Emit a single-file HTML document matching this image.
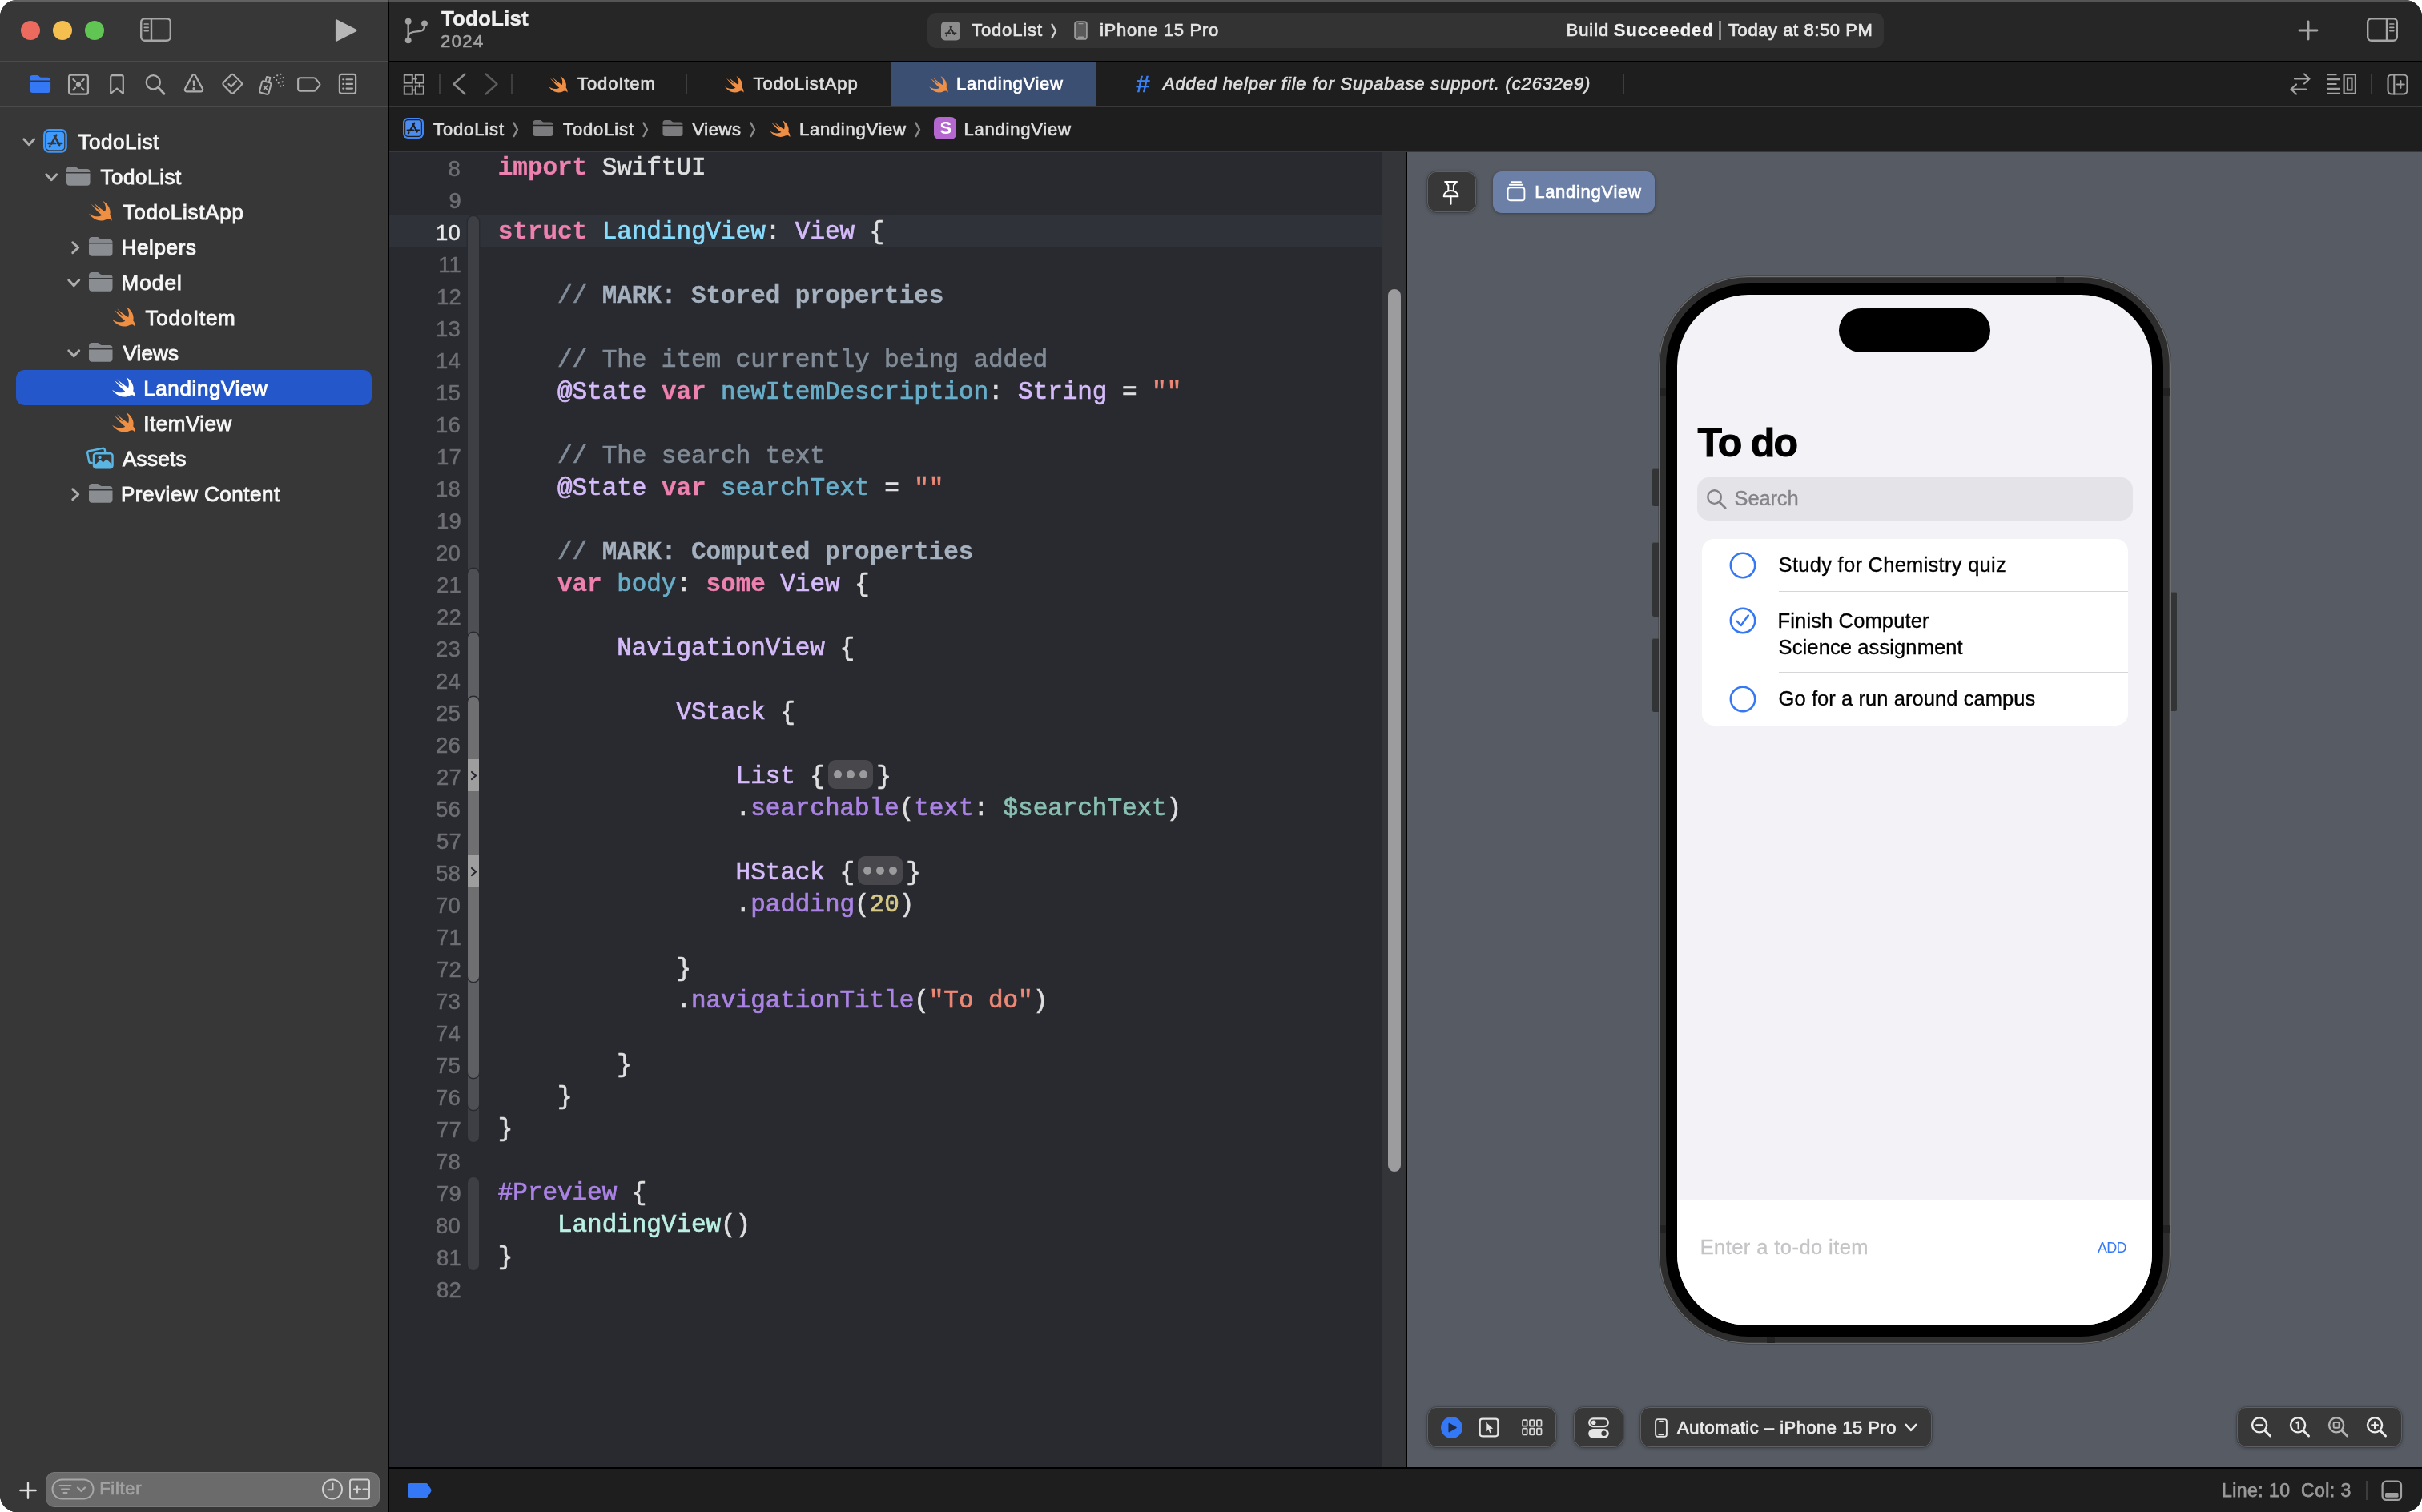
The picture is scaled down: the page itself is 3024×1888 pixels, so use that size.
<!DOCTYPE html>
<html lang="en"><head><meta charset="utf-8"><title>TodoList — LandingView.swift</title>
<style>
html,body{margin:0;padding:0;background:#fff;}
body{width:3024px;height:1888px;overflow:hidden;position:relative;}
.win{position:absolute;left:0;top:0;width:3024px;height:1888px;border-radius:21px;overflow:hidden;background:#1e1e1e;will-change:transform;}
.win div,.win svg{position:absolute;}
.win svg{overflow:visible;display:block;}
.t{white-space:pre;-webkit-text-stroke:0.700px currentColor;}
.code{white-space:pre;font:400 31px/40px "Liberation Mono",monospace;color:#dfdfe0;height:40px;}
.code span{position:static;-webkit-text-stroke:0.700px currentColor;}
.code .k,.code .m{-webkit-text-stroke:0.300px currentColor;}
.k{color:#ee81b0;font-weight:700;}
.p{color:#dfdfe0;}
.td{color:#89dcfb;}
.d{color:#68aec9;}
.ot{color:#d5bbfa;}
.c{color:#818c97;}
.m{color:#a5b1be;font-weight:700;}
.s{color:#ef8876;}
.n{color:#d6ca86;}
.f{color:#ab83e5;}
.pv{color:#89c0b3;}
.pt{color:#bbf0e4;}
.fold{display:inline-block;position:relative!important;width:56px;height:0;margin:0 4.300px 0 4px;vertical-align:baseline;letter-spacing:0;}
.fold b{position:absolute;left:0;top:-28.700px;width:56px;height:36px;border-radius:9px;background:#48484c;}
.fold i{position:absolute;top:13px;width:10px;height:10px;border-radius:50%;background:#9b9b9d;}
.fold i:nth-child(1){left:7px;}.fold i:nth-child(2){left:23px;}.fold i:nth-child(3){left:39px;}
</style></head>
<body><div class="win">
<div style="left:0px;top:0px;width:484px;height:1888px;background:#373737;"></div>
<div style="left:486px;top:0px;width:2538px;height:76px;background:#262626;"></div>
<div style="left:486px;top:78px;width:2538px;height:54px;background:#1e1e1e;"></div>
<div style="left:486px;top:134px;width:2538px;height:54px;background:#1e1e1e;"></div>
<div style="left:486px;top:190px;width:1239px;height:1642px;background:#292a30;"></div>
<div style="left:1725px;top:190px;width:30px;height:1642px;background:#343539;border-left:1px solid #404146;box-sizing:border-box;"></div>
<div style="left:1757px;top:190px;width:1267px;height:1642px;background:#565b64;"></div>
<div style="left:486px;top:1834px;width:2538px;height:54px;background:#1e1e1e;"></div>
<div style="left:0px;top:76px;width:484px;height:2px;background:#4b4b4b;"></div>
<div style="left:0px;top:132px;width:484px;height:2px;background:#4b4b4b;"></div>
<div style="left:486px;top:76px;width:2538px;height:2px;background:#000;"></div>
<div style="left:486px;top:132px;width:2538px;height:2px;background:#393939;"></div>
<div style="left:486px;top:188px;width:2538px;height:2px;background:#393939;"></div>
<div style="left:486px;top:1832px;width:2538px;height:2px;background:#000;"></div>
<div style="left:484px;top:0px;width:2px;height:1888px;background:#000;"></div>
<div style="left:1755px;top:190px;width:2px;height:1642px;background:#000;"></div>
<div style="left:0px;top:0px;width:3024px;height:2px;background:rgba(255,255,255,0.22);"></div>
<div style="left:26px;top:26px;width:24px;height:24px;background:#ed6a5e;border-radius:50%;"></div>
<div style="left:66px;top:26px;width:24px;height:24px;background:#f4bf4f;border-radius:50%;"></div>
<div style="left:106px;top:26px;width:24px;height:24px;background:#61c554;border-radius:50%;"></div>
<svg style="left:174px;top:21px;" width="41" height="32" viewBox="0 0 41 32"><rect x="2.2" y="2.2" width="36.600" height="27.600" rx="4.500" fill="none" stroke="#a6a6a6" stroke-width="2.400"/><path d="M15 2.200V29.800" stroke="#a6a6a6" stroke-width="2.400"/><path d="M6.300 9h4.800M6.300 13.300h4.800M6.300 17.600h4.800" stroke="#a6a6a6" stroke-width="1.700" stroke-linecap="round"/></svg>
<svg style="left:418px;top:23px;" width="29" height="30" viewBox="0 0 29 30"><path d="M2.200 2.600L26.300 15L2.200 27.400Z" fill="#b6b6b6" stroke="#b6b6b6" stroke-width="2.600" stroke-linejoin="round"/></svg>
<svg style="left:504.2px;top:21px;" width="33" height="35" viewBox="0 0 33 35"><g fill="none" stroke="#a2a2a2" stroke-width="2.400" stroke-linecap="round"><path d="M5.700 8.500V27.500"/><path d="M26 11.500c0 5.600-3.600 6.700-9.500 6.900-6 .3-10.800 1.300-10.800 6.600"/></g><circle cx="5.700" cy="5.700" r="3.900" fill="#a2a2a2"/><circle cx="5.700" cy="29.300" r="3.900" fill="#a2a2a2"/><circle cx="26" cy="8.300" r="3.900" fill="#a2a2a2"/></svg>
<div class="t" style="left:551.00px;top:9.69px;font:normal 700 26px/26px 'Liberation Sans', sans-serif;color:#f0f0f0;letter-spacing:0.120px;-webkit-text-stroke:0.4px currentColor;">TodoList</div>
<div class="t" style="left:550.00px;top:41.38px;font:normal 400 22px/22px 'Liberation Sans', sans-serif;color:#a2a2a2;letter-spacing:1.431px;">2024</div>
<div style="left:1158px;top:16px;width:1194px;height:44px;background:#333333;border-radius:11px;"></div>
<svg style="left:1175px;top:26.5px;" width="24" height="23.5" viewBox="0 0 24 23.5"><rect width="24" height="23.500" rx="5" fill="#8c8c8c"/><g stroke="#2d2d2d" stroke-width="1.700" stroke-linecap="round" fill="none"><path d="M13.400 6.200L8.400 15"/><path d="M11.300 6.600L16.400 16"/><path d="M5.600 14.300H12"/><path d="M14.800 14.300H18.600"/><path d="M7 17L6.600 17.700"/></g></svg>
<div class="t" style="left:1213.00px;top:27.38px;font:normal 400 22px/22px 'Liberation Sans', sans-serif;color:#e4e4e4;letter-spacing:0.882px;">TodoList</div>
<svg style="left:1312px;top:28.6px;" width="8" height="20" viewBox="0 0 8 20"><path d="M1.500 1.500L6 9.800L1.500 18.100" fill="none" stroke="#d0d0d0" stroke-width="2.400" stroke-linecap="round" stroke-linejoin="round"/></svg>
<svg style="left:1341px;top:26px;" width="17" height="24" viewBox="0 0 17 24"><rect x="1.100" y="1.100" width="14.800" height="21.800" rx="3" fill="#5a5a5a" stroke="#9a9a9a" stroke-width="1.800"/><path d="M6 3.600h5" stroke="#9a9a9a" stroke-width="1.400" stroke-linecap="round"/><path d="M5.500 20.200h6" stroke="#9a9a9a" stroke-width="1.400" stroke-linecap="round"/></svg>
<div class="t" style="left:1373.00px;top:27.38px;font:normal 400 22px/22px 'Liberation Sans', sans-serif;color:#e4e4e4;letter-spacing:0.733px;">iPhone 15 Pro</div>
<div class="t" style="left:1955.50px;top:27.38px;font:normal 400 22px/22px 'Liberation Sans', sans-serif;color:#e8e8e8;letter-spacing:0.954px;">Build</div>
<div class="t" style="left:2014.70px;top:27.38px;font:normal 700 22px/22px 'Liberation Sans', sans-serif;color:#f2f2f2;letter-spacing:0.984px;-webkit-text-stroke:0.3px currentColor;">Succeeded</div>
<div class="t" style="left:2144.20px;top:24.34px;font:normal 400 25px/25px 'Liberation Sans', sans-serif;color:#d6d6d6;letter-spacing:0.000px;-webkit-text-stroke:0px currentColor;">|</div>
<div class="t" style="left:2158.00px;top:27.38px;font:normal 400 22px/22px 'Liberation Sans', sans-serif;color:#e8e8e8;letter-spacing:0.574px;">Today at 8:50 PM</div>
<svg style="left:2869px;top:25px;" width="26" height="26" viewBox="0 0 26 26"><path d="M13 2V24M2 13H24" stroke="#a6a6a6" stroke-width="2.900" stroke-linecap="round"/></svg>
<svg style="left:2954px;top:21px;" width="41" height="32" viewBox="0 0 41 32"><rect x="2.200" y="2.200" width="36.600" height="27.600" rx="4.500" fill="none" stroke="#a6a6a6" stroke-width="2.400"/><path d="M26 2.200V29.800" stroke="#a6a6a6" stroke-width="2.400"/><path d="M29.900 9h4.800M29.900 13.300h4.800M29.900 17.600h4.800" stroke="#a6a6a6" stroke-width="1.700" stroke-linecap="round"/></svg>
<svg style="left:503px;top:92px;" width="28" height="27" viewBox="0 0 28 27"><g fill="none" stroke="#a2a2a2" stroke-width="2"><rect x="1.800" y="1.600" width="10" height="10"/><rect x="15.800" y="1.600" width="10" height="10"/><rect x="1.800" y="15.600" width="10" height="10"/><rect x="15.800" y="15.600" width="10" height="10"/><path d="M11.800 6.600h6M20.800 11.600v6M11.800 20.600h4"/></g></svg>
<div style="left:548px;top:93px;width:2px;height:24px;background:#3d3d3d;"></div>
<svg style="left:565px;top:91px;" width="17" height="28" viewBox="0 0 17 28"><path d="M15.5 1.5L1.5 14.0L15.5 26.5" fill="none" stroke="#8e8e8e" stroke-width="2.4" stroke-linecap="round" stroke-linejoin="round"/></svg>
<svg style="left:605px;top:91px;" width="17" height="28" viewBox="0 0 17 28"><path d="M1.5 1.5L15.5 14.0L1.5 26.5" fill="none" stroke="#5c5c5c" stroke-width="2.4" stroke-linecap="round" stroke-linejoin="round"/></svg>
<div style="left:638px;top:93px;width:2px;height:24px;background:#3d3d3d;"></div>
<svg style="left:685.2px;top:95.2px;" width="23.6" height="20.6" viewBox="2.41 3.41 18.12 16.21" preserveAspectRatio="none"><path d="M13.543 3.41c4.114 2.47 6.545 7.162 5.549 11.131-.024.093-.05.181-.076.272l.002.001c2.062 2.538 1.5 5.258 1.236 4.745-1.072-2.086-3.066-1.568-4.088-1.043a6.803 6.803 0 0 1-.281.158l-.02.012-.002.002c-2.115 1.123-4.957 1.205-7.812-.022a12.568 12.568 0 0 1-5.64-4.838c.649.48 1.35.902 2.097 1.252 3.019 1.414 6.051 1.311 8.197-.002C9.651 12.73 7.101 9.67 5.146 7.191a10.628 10.628 0 0 1-1.005-1.384c2.34 2.142 6.038 4.83 7.365 5.576C8.69 8.408 6.208 4.743 6.324 4.86c4.436 4.47 8.528 6.996 8.528 6.996.154.085.27.154.36.213.085-.215.16-.437.224-.668.708-2.588-.09-5.548-1.893-7.992z" fill="#ee8f45"/></svg>
<div class="t" style="left:721.00px;top:94.38px;font:normal 400 22px/22px 'Liberation Sans', sans-serif;color:#dedede;letter-spacing:0.905px;">TodoItem</div>
<div style="left:856px;top:93px;width:2px;height:24px;background:#3d3d3d;"></div>
<svg style="left:905px;top:95.2px;" width="23.6" height="20.6" viewBox="2.41 3.41 18.12 16.21" preserveAspectRatio="none"><path d="M13.543 3.41c4.114 2.47 6.545 7.162 5.549 11.131-.024.093-.05.181-.076.272l.002.001c2.062 2.538 1.5 5.258 1.236 4.745-1.072-2.086-3.066-1.568-4.088-1.043a6.803 6.803 0 0 1-.281.158l-.02.012-.002.002c-2.115 1.123-4.957 1.205-7.812-.022a12.568 12.568 0 0 1-5.64-4.838c.649.48 1.35.902 2.097 1.252 3.019 1.414 6.051 1.311 8.197-.002C9.651 12.73 7.101 9.67 5.146 7.191a10.628 10.628 0 0 1-1.005-1.384c2.34 2.142 6.038 4.83 7.365 5.576C8.69 8.408 6.208 4.743 6.324 4.86c4.436 4.47 8.528 6.996 8.528 6.996.154.085.27.154.36.213.085-.215.16-.437.224-.668.708-2.588-.09-5.548-1.893-7.992z" fill="#ee8f45"/></svg>
<div class="t" style="left:940.50px;top:94.38px;font:normal 400 22px/22px 'Liberation Sans', sans-serif;color:#dedede;letter-spacing:0.915px;">TodoListApp</div>
<div style="left:1112px;top:78px;width:256px;height:54px;background:#3b4f73;"></div>
<svg style="left:1159.5px;top:95.2px;" width="23.6" height="20.6" viewBox="2.41 3.41 18.12 16.21" preserveAspectRatio="none"><path d="M13.543 3.41c4.114 2.47 6.545 7.162 5.549 11.131-.024.093-.05.181-.076.272l.002.001c2.062 2.538 1.5 5.258 1.236 4.745-1.072-2.086-3.066-1.568-4.088-1.043a6.803 6.803 0 0 1-.281.158l-.02.012-.002.002c-2.115 1.123-4.957 1.205-7.812-.022a12.568 12.568 0 0 1-5.64-4.838c.649.48 1.35.902 2.097 1.252 3.019 1.414 6.051 1.311 8.197-.002C9.651 12.73 7.101 9.67 5.146 7.191a10.628 10.628 0 0 1-1.005-1.384c2.34 2.142 6.038 4.83 7.365 5.576C8.69 8.408 6.208 4.743 6.324 4.86c4.436 4.47 8.528 6.996 8.528 6.996.154.085.27.154.36.213.085-.215.16-.437.224-.668.708-2.588-.09-5.548-1.893-7.992z" fill="#ee8f45"/></svg>
<div class="t" style="left:1194.00px;top:94.38px;font:normal 400 22px/22px 'Liberation Sans', sans-serif;color:#ffffff;letter-spacing:0.730px;">LandingView</div>
<div class="t" style="left:1418.30px;top:90.20px;font:italic 400 30px/30px 'Liberation Sans', sans-serif;color:#3b82f6;letter-spacing:0.000px;">#</div>
<div class="t" style="left:1452.00px;top:94.38px;font:italic 400 22px/22px 'Liberation Sans', sans-serif;color:#dedede;letter-spacing:0.843px;">Added helper file for Supabase support. (c2632e9)</div>
<div style="left:2026px;top:93px;width:2px;height:24px;background:#3d3d3d;"></div>
<svg style="left:2858px;top:90px;" width="28" height="30" viewBox="0 0 28 30"><g fill="none" stroke="#a2a2a2" stroke-width="2.200" stroke-linecap="round" stroke-linejoin="round"><path d="M7 8.500H25.500M19 2.500L25.500 8.500L19 14.500"/><path d="M21 21.500H2.500M9 15.500L2.500 21.500L9 27.500"/></g></svg>
<svg style="left:2905px;top:91px;" width="38" height="28" viewBox="0 0 38 28"><g fill="none" stroke="#a2a2a2" stroke-width="2.200"><path d="M1 2.200H12.500M1 8.100H17M1 14H12.500M1 19.900H17M1 25.800H17"/><rect x="21.600" y="2.100" width="14.300" height="23.800"/><rect x="26" y="6.600" width="5.500" height="14.800"/></g></svg>
<div style="left:2960px;top:93px;width:2px;height:24px;background:#3d3d3d;"></div>
<svg style="left:2979.5px;top:91.5px;" width="27" height="27" viewBox="0 0 28 28"><g fill="none" stroke="#a2a2a2" stroke-width="2.200" stroke-linecap="round"><rect x="1.600" y="1.600" width="24.800" height="24.800" rx="4.500"/><path d="M9.600 1.600V26.400"/><path d="M18 9.500V18.500M13.500 14H22.500"/></g></svg>
<svg style="left:503px;top:147px;" width="26" height="26" viewBox="0 0 26 26"><rect x="0" y="0" width="26" height="26" rx="6.2" fill="#3f86f4"/><rect x="2.1" y="2.1" width="21.8" height="21.8" rx="4.3" fill="#1e1e1e"/><rect x="3.2" y="3.2" width="19.600" height="19.600" rx="3.300" fill="#4a8cf0"/><g stroke="#1e1e1e" stroke-width="2.2" stroke-linecap="round" fill="none"><path d="M14.300 6.700L8.800 16.200"/><path d="M12 7.100L17.700 17.600"/><path d="M5.700 15.700H13.200"/><path d="M15.700 15.700H20.300"/><path d="M7.400 18.500L6.900 19.300"/></g></svg>
<div class="t" style="left:541.00px;top:150.58px;font:normal 400 22px/22px 'Liberation Sans', sans-serif;color:#dedede;letter-spacing:0.882px;">TodoList</div>
<svg style="left:640px;top:151.6px;" width="8" height="20" viewBox="0 0 8 20"><path d="M1.500 1.500L6 9.800L1.500 18.100" fill="none" stroke="#8a8a8a" stroke-width="2.400" stroke-linecap="round" stroke-linejoin="round"/></svg>
<svg style="left:665px;top:150.3px;" width="26" height="20" viewBox="0 0 30 24"><path d="M0 4.2C0 1.8 1.4 0 3.8 0h6.4c1.3 0 2 .3 2.8 1.1l1 1c.6.6 1.1.8 2 .8h10.2C28.600 2.900 30 4.300 30 6.600V7H0z" fill="#6f6f71"/><path d="M0 8.600h30v11.400c0 2.500-1.400 4-3.900 4H3.900C1.400 24 0 22.500 0 20z" fill="#7c7c7e"/></svg>
<div class="t" style="left:703.00px;top:150.58px;font:normal 400 22px/22px 'Liberation Sans', sans-serif;color:#dedede;letter-spacing:0.882px;">TodoList</div>
<svg style="left:802px;top:151.6px;" width="8" height="20" viewBox="0 0 8 20"><path d="M1.500 1.500L6 9.800L1.500 18.100" fill="none" stroke="#8a8a8a" stroke-width="2.400" stroke-linecap="round" stroke-linejoin="round"/></svg>
<svg style="left:827px;top:150.3px;" width="26" height="20" viewBox="0 0 30 24"><path d="M0 4.2C0 1.8 1.4 0 3.8 0h6.4c1.3 0 2 .3 2.8 1.1l1 1c.6.6 1.1.8 2 .8h10.2C28.600 2.900 30 4.300 30 6.600V7H0z" fill="#6f6f71"/><path d="M0 8.600h30v11.400c0 2.500-1.400 4-3.900 4H3.900C1.400 24 0 22.500 0 20z" fill="#7c7c7e"/></svg>
<div class="t" style="left:864.50px;top:150.58px;font:normal 400 22px/22px 'Liberation Sans', sans-serif;color:#dedede;letter-spacing:0.553px;">Views</div>
<svg style="left:936px;top:151.6px;" width="8" height="20" viewBox="0 0 8 20"><path d="M1.500 1.500L6 9.800L1.500 18.100" fill="none" stroke="#8a8a8a" stroke-width="2.400" stroke-linecap="round" stroke-linejoin="round"/></svg>
<svg style="left:961px;top:150px;" width="25.5" height="21" viewBox="2.41 3.41 18.12 16.21" preserveAspectRatio="none"><path d="M13.543 3.41c4.114 2.47 6.545 7.162 5.549 11.131-.024.093-.05.181-.076.272l.002.001c2.062 2.538 1.5 5.258 1.236 4.745-1.072-2.086-3.066-1.568-4.088-1.043a6.803 6.803 0 0 1-.281.158l-.02.012-.002.002c-2.115 1.123-4.957 1.205-7.812-.022a12.568 12.568 0 0 1-5.64-4.838c.649.48 1.35.902 2.097 1.252 3.019 1.414 6.051 1.311 8.197-.002C9.651 12.73 7.101 9.67 5.146 7.191a10.628 10.628 0 0 1-1.005-1.384c2.34 2.142 6.038 4.83 7.365 5.576C8.69 8.408 6.208 4.743 6.324 4.86c4.436 4.47 8.528 6.996 8.528 6.996.154.085.27.154.36.213.085-.215.16-.437.224-.668.708-2.588-.09-5.548-1.893-7.992z" fill="#ee8f45"/></svg>
<div class="t" style="left:998.00px;top:150.58px;font:normal 400 22px/22px 'Liberation Sans', sans-serif;color:#dedede;letter-spacing:0.730px;">LandingView</div>
<svg style="left:1142px;top:151.6px;" width="8" height="20" viewBox="0 0 8 20"><path d="M1.500 1.500L6 9.800L1.500 18.100" fill="none" stroke="#8a8a8a" stroke-width="2.400" stroke-linecap="round" stroke-linejoin="round"/></svg>
<div style="left:1166px;top:146px;width:28px;height:28px;background:#b467cf;border-radius:6.500px;"></div>
<div class="t" style="left:1173.60px;top:149.18px;font:normal 700 22px/22px 'Liberation Sans', sans-serif;color:#ffffff;letter-spacing:0.000px;-webkit-text-stroke:0px currentColor;">S</div>
<div class="t" style="left:1203.50px;top:150.58px;font:normal 400 22px/22px 'Liberation Sans', sans-serif;color:#dedede;letter-spacing:0.780px;">LandingView</div>
<svg style="left:509px;top:1852px;" width="30" height="18" viewBox="0 0 30 18"><path d="M3 0H22.500c1.200 0 2 .4 2.600 1.300L29 7.300c.7 1 .7 2.400 0 3.400l-3.900 6c-.6.900-1.400 1.300-2.600 1.300H3c-1.800 0-3-1.200-3-3V3C0 1.200 1.200 0 3 0z" fill="#3478f6"/></svg>
<div class="t" style="left:2774.00px;top:1849.53px;font:normal 400 23px/23px 'Liberation Sans', sans-serif;color:#9a9a9a;letter-spacing:0.439px;-webkit-text-stroke:0.75px currentColor;">Line: 10  Col: 3</div>
<div style="left:2954px;top:1849px;width:2px;height:24px;background:#3d3d3d;"></div>
<svg style="left:2972.7px;top:1847.7px;" width="26.6" height="26.6" viewBox="0 0 28 28"><rect x="1.700" y="1.700" width="24.600" height="24.600" rx="5" fill="none" stroke="#a0a0a0" stroke-width="2.400"/><rect x="5.300" y="16.800" width="17.400" height="6" rx="1.500" fill="#a0a0a0"/></svg>
<svg style="left:36.8px;top:93.9px;" width="26.4" height="22" viewBox="0 0 27 23"><path d="M0 4C0 1.600 1.300 0 3.600 0h5.600c1.200 0 1.900.3 2.600 1l1 1c.6.600 1.100.800 1.900.800h8.800C25.700 2.800 27 4.100 27 6.300V6.800H0z" fill="#3478f6"/><path d="M0 8.800h27v10.400c0 2.400-1.300 3.800-3.700 3.800H3.700C1.300 23 0 21.600 0 19.200z" fill="#3478f6"/></svg>
<svg style="left:84px;top:91.5px;" width="28" height="27" viewBox="0 0 28 27"><rect x="2.100" y="1.700" width="23.800" height="24" rx="2.800" fill="none" stroke="#adadad" stroke-width="2.300"/><path d="M7.400 7.100L10 9.700M20.600 7.100L18 9.700M7.400 20.300L10 17.700M20.600 20.300L18 17.700" stroke="#adadad" stroke-width="2.200" stroke-linecap="round"/><circle cx="14" cy="13.700" r="3.200" fill="#adadad"/></svg>
<svg style="left:136px;top:91.5px;" width="20" height="28" viewBox="0 0 20 28"><path d="M2.200 4.200c0-1.300.8-2.100 2.100-2.100h11.400c1.300 0 2.100.8 2.100 2.100V25L10 18.500L2.200 25z" fill="none" stroke="#adadad" stroke-width="2.200" stroke-linejoin="round"/></svg>
<svg style="left:181.3px;top:91.6px;" width="26" height="28" viewBox="0 0 26 28"><circle cx="10.300" cy="10.800" r="8.600" fill="none" stroke="#adadad" stroke-width="2.300"/><path d="M16.600 17.300L24 25.300" stroke="#adadad" stroke-width="2.800" stroke-linecap="round"/></svg>
<svg style="left:229px;top:90.7px;" width="26" height="27" viewBox="0 0 26 26" preserveAspectRatio="none"><path d="M11.100 3.200c.9-1.500 2.900-1.500 3.800 0l9 15.900c.9 1.600-.1 3.400-1.900 3.400H4c-1.800 0-2.800-1.800-1.900-3.400z" fill="none" stroke="#adadad" stroke-width="2.200" stroke-linejoin="round"/><path d="M11.600 9.200h2.800l-.5 6.600h-1.800z" fill="#adadad"/><circle cx="13" cy="18.900" r="1.600" fill="#adadad"/></svg>
<svg style="left:275.7px;top:91.1px;" width="28.3" height="27.7" viewBox="0 0 29 28"><path d="M12.700 2.700c1-1 2.600-1 3.600 0l9.500 9.500c1 1 1 2.600 0 3.600l-9.500 9.500c-1 1-2.600 1-3.600 0L3.200 15.800c-1-1-1-2.600 0-3.600z" fill="none" stroke="#adadad" stroke-width="2.200"/><path d="M9.700 14.200L13 17.500L19.500 10.500" fill="none" stroke="#adadad" stroke-width="2.300" stroke-linecap="round" stroke-linejoin="round"/></svg>
<svg style="left:322.2px;top:91.3px;" width="34" height="28.8" viewBox="0 0 33 28"><g fill="none" stroke="#adadad" stroke-width="2" stroke-linejoin="round"><path d="M4.800 11.500c.3-1.200 1.300-1.700 2.500-1.400l7 1.900c1.200.3 1.800 1.300 1.500 2.500l-2.700 10c-.3 1.200-1.300 1.800-2.500 1.500l-7-1.900c-1.200-.3-1.800-1.300-1.500-2.500z"/><path d="M9.400 9.800l1.300-5 4.200 1.100-1.300 5"/></g><path d="M7 16.200l4.300 4M11.300 15.800l-4.300 4.800" stroke="#adadad" stroke-width="1.700" stroke-linecap="round"/><g fill="#adadad"><circle cx="19.500" cy="5.800" r="1.100"/><circle cx="23.500" cy="3.200" r="1.100"/><circle cx="27.800" cy="1.800" r="1.100"/><circle cx="22.500" cy="8.800" r="1.100"/><circle cx="27" cy="6.800" r="1.100"/><circle cx="30.800" cy="6" r="1.100"/><circle cx="25" cy="12.300" r="1.100"/><circle cx="29.800" cy="11" r="1.100"/><circle cx="27.500" cy="16.200" r="1.100"/><circle cx="31" cy="15.500" r="1.100"/></g></svg>
<svg style="left:370.8px;top:95.6px;" width="30.4" height="19" viewBox="0 0 32 20"><path d="M4 1.300H21.800c1.100 0 1.900.4 2.500 1.200L29.600 9c.5.600.5 1.400 0 2l-5.300 6.500c-.6.800-1.400 1.200-2.500 1.200H4c-1.700 0-2.800-1.100-2.800-2.800V4.100C1.200 2.400 2.300 1.300 4 1.300z" fill="none" stroke="#adadad" stroke-width="2.200"/></svg>
<svg style="left:422px;top:91.2px;" width="24" height="27.8" viewBox="0 0 24 27" preserveAspectRatio="none"><rect x="1.900" y="1.900" width="20.200" height="23.200" rx="2.500" fill="none" stroke="#adadad" stroke-width="2.200"/><path d="M10.500 8H18M10.500 13.500H18M10.500 19H18" stroke="#adadad" stroke-width="2.100" stroke-linecap="round"/><path d="M6.200 8h1M6.200 13.500h1M6.200 19h1" stroke="#adadad" stroke-width="2.100" stroke-linecap="round"/></svg>
<div style="left:20px;top:462px;width:444px;height:44px;background:#2457c9;border-radius:10px;"></div>
<svg style="left:28px;top:172px;" width="16.5" height="10.5" viewBox="0 0 16.5 10.5"><path d="M1.8 1.8L8.25 8.7L14.7 1.8" fill="none" stroke="#adadad" stroke-width="3.0" stroke-linecap="round" stroke-linejoin="round"/></svg>
<svg style="left:54.1px;top:160.7px;" width="29.8" height="29.8" viewBox="0 0 26 26"><rect x="0" y="0" width="26" height="26" rx="6.2" fill="#3b97fb"/><rect x="2.1" y="2.1" width="21.8" height="21.8" rx="4.3" fill="#373737"/><rect x="3.2" y="3.2" width="19.600" height="19.600" rx="3.300" fill="#409cff"/><g stroke="#373737" stroke-width="2.2" stroke-linecap="round" fill="none"><path d="M14.300 6.700L8.800 16.200"/><path d="M12 7.100L17.700 17.600"/><path d="M5.700 15.700H13.200"/><path d="M15.700 15.700H20.300"/><path d="M7.400 18.500L6.900 19.300"/></g></svg>
<div class="t" style="left:97.30px;top:163.79px;font:normal 400 26px/26px 'Liberation Sans', sans-serif;color:#f7f7f7;letter-spacing:0.583px;-webkit-text-stroke:0.9px currentColor;">TodoList</div>
<svg style="left:56px;top:216px;" width="16.5" height="10.5" viewBox="0 0 16.5 10.5"><path d="M1.8 1.8L8.25 8.7L14.7 1.8" fill="none" stroke="#adadad" stroke-width="3.0" stroke-linecap="round" stroke-linejoin="round"/></svg>
<svg style="left:83px;top:208.2px;" width="29.5" height="23.7" viewBox="0 0 30 24"><path d="M0 4.2C0 1.8 1.4 0 3.8 0h6.4c1.3 0 2 .3 2.8 1.1l1 1c.6.6 1.1.8 2 .8h10.2C28.600 2.900 30 4.300 30 6.600V7H0z" fill="#85888c"/><path d="M0 8.600h30v11.400c0 2.500-1.400 4-3.900 4H3.900C1.400 24 0 22.500 0 20z" fill="#8a8d91"/></svg>
<div class="t" style="left:125.40px;top:207.79px;font:normal 400 26px/26px 'Liberation Sans', sans-serif;color:#f7f7f7;letter-spacing:0.583px;-webkit-text-stroke:0.9px currentColor;">TodoList</div>
<svg style="left:111.4px;top:251.4px;" width="28.6" height="24.6" viewBox="2.41 3.41 18.12 16.21" preserveAspectRatio="none"><path d="M13.543 3.41c4.114 2.47 6.545 7.162 5.549 11.131-.024.093-.05.181-.076.272l.002.001c2.062 2.538 1.5 5.258 1.236 4.745-1.072-2.086-3.066-1.568-4.088-1.043a6.803 6.803 0 0 1-.281.158l-.02.012-.002.002c-2.115 1.123-4.957 1.205-7.812-.022a12.568 12.568 0 0 1-5.64-4.838c.649.48 1.35.902 2.097 1.252 3.019 1.414 6.051 1.311 8.197-.002C9.651 12.73 7.101 9.67 5.146 7.191a10.628 10.628 0 0 1-1.005-1.384c2.34 2.142 6.038 4.83 7.365 5.576C8.69 8.408 6.208 4.743 6.324 4.86c4.436 4.47 8.528 6.996 8.528 6.996.154.085.27.154.36.213.085-.215.16-.437.224-.668.708-2.588-.09-5.548-1.893-7.992z" fill="#f08f42"/></svg>
<div class="t" style="left:153.50px;top:251.79px;font:normal 400 26px/26px 'Liberation Sans', sans-serif;color:#f7f7f7;letter-spacing:0.736px;-webkit-text-stroke:0.9px currentColor;">TodoListApp</div>
<svg style="left:89px;top:300.8px;" width="10.5" height="16.5" viewBox="0 0 10.5 16.5"><path d="M1.8 1.8L8.7 8.25L1.8 14.7" fill="none" stroke="#adadad" stroke-width="3.0" stroke-linecap="round" stroke-linejoin="round"/></svg>
<svg style="left:111px;top:296.2px;" width="29.5" height="23.7" viewBox="0 0 30 24"><path d="M0 4.2C0 1.8 1.4 0 3.8 0h6.4c1.3 0 2 .3 2.8 1.1l1 1c.6.6 1.1.8 2 .8h10.2C28.600 2.900 30 4.300 30 6.600V7H0z" fill="#85888c"/><path d="M0 8.600h30v11.400c0 2.500-1.400 4-3.900 4H3.900C1.400 24 0 22.500 0 20z" fill="#8a8d91"/></svg>
<div class="t" style="left:151.50px;top:295.79px;font:normal 400 26px/26px 'Liberation Sans', sans-serif;color:#f7f7f7;letter-spacing:0.652px;-webkit-text-stroke:0.9px currentColor;">Helpers</div>
<svg style="left:84px;top:348px;" width="16.5" height="10.5" viewBox="0 0 16.5 10.5"><path d="M1.8 1.8L8.25 8.7L14.7 1.8" fill="none" stroke="#adadad" stroke-width="3.0" stroke-linecap="round" stroke-linejoin="round"/></svg>
<svg style="left:111px;top:340.2px;" width="29.5" height="23.7" viewBox="0 0 30 24"><path d="M0 4.2C0 1.8 1.4 0 3.8 0h6.4c1.3 0 2 .3 2.8 1.1l1 1c.6.6 1.1.8 2 .8h10.2C28.600 2.900 30 4.300 30 6.600V7H0z" fill="#85888c"/><path d="M0 8.600h30v11.400c0 2.500-1.400 4-3.900 4H3.900C1.400 24 0 22.500 0 20z" fill="#8a8d91"/></svg>
<div class="t" style="left:151.50px;top:339.79px;font:normal 400 26px/26px 'Liberation Sans', sans-serif;color:#f7f7f7;letter-spacing:1.115px;-webkit-text-stroke:0.9px currentColor;">Model</div>
<svg style="left:139.5px;top:383.4px;" width="28.6" height="24.6" viewBox="2.41 3.41 18.12 16.21" preserveAspectRatio="none"><path d="M13.543 3.41c4.114 2.47 6.545 7.162 5.549 11.131-.024.093-.05.181-.076.272l.002.001c2.062 2.538 1.5 5.258 1.236 4.745-1.072-2.086-3.066-1.568-4.088-1.043a6.803 6.803 0 0 1-.281.158l-.02.012-.002.002c-2.115 1.123-4.957 1.205-7.812-.022a12.568 12.568 0 0 1-5.64-4.838c.649.48 1.35.902 2.097 1.252 3.019 1.414 6.051 1.311 8.197-.002C9.651 12.73 7.101 9.67 5.146 7.191a10.628 10.628 0 0 1-1.005-1.384c2.34 2.142 6.038 4.83 7.365 5.576C8.69 8.408 6.208 4.743 6.324 4.86c4.436 4.47 8.528 6.996 8.528 6.996.154.085.27.154.36.213.085-.215.16-.437.224-.668.708-2.588-.09-5.548-1.893-7.992z" fill="#f08f42"/></svg>
<div class="t" style="left:181.60px;top:383.79px;font:normal 400 26px/26px 'Liberation Sans', sans-serif;color:#f7f7f7;letter-spacing:0.745px;-webkit-text-stroke:0.9px currentColor;">TodoItem</div>
<svg style="left:84px;top:436px;" width="16.5" height="10.5" viewBox="0 0 16.5 10.5"><path d="M1.8 1.8L8.25 8.7L14.7 1.8" fill="none" stroke="#adadad" stroke-width="3.0" stroke-linecap="round" stroke-linejoin="round"/></svg>
<svg style="left:111px;top:428.2px;" width="29.5" height="23.7" viewBox="0 0 30 24"><path d="M0 4.2C0 1.8 1.4 0 3.8 0h6.4c1.3 0 2 .3 2.8 1.1l1 1c.6.6 1.1.8 2 .8h10.2C28.600 2.900 30 4.300 30 6.600V7H0z" fill="#85888c"/><path d="M0 8.600h30v11.400c0 2.500-1.400 4-3.900 4H3.900C1.400 24 0 22.500 0 20z" fill="#8a8d91"/></svg>
<div class="t" style="left:153.50px;top:427.79px;font:normal 400 26px/26px 'Liberation Sans', sans-serif;color:#f7f7f7;letter-spacing:0.154px;-webkit-text-stroke:0.9px currentColor;">Views</div>
<svg style="left:139.5px;top:471.4px;" width="28.6" height="24.6" viewBox="2.41 3.41 18.12 16.21" preserveAspectRatio="none"><path d="M13.543 3.41c4.114 2.47 6.545 7.162 5.549 11.131-.024.093-.05.181-.076.272l.002.001c2.062 2.538 1.5 5.258 1.236 4.745-1.072-2.086-3.066-1.568-4.088-1.043a6.803 6.803 0 0 1-.281.158l-.02.012-.002.002c-2.115 1.123-4.957 1.205-7.812-.022a12.568 12.568 0 0 1-5.64-4.838c.649.48 1.35.902 2.097 1.252 3.019 1.414 6.051 1.311 8.197-.002C9.651 12.73 7.101 9.67 5.146 7.191a10.628 10.628 0 0 1-1.005-1.384c2.34 2.142 6.038 4.83 7.365 5.576C8.69 8.408 6.208 4.743 6.324 4.86c4.436 4.47 8.528 6.996 8.528 6.996.154.085.27.154.36.213.085-.215.16-.437.224-.668.708-2.588-.09-5.548-1.893-7.992z" fill="#ffffff"/></svg>
<div class="t" style="left:179.20px;top:471.79px;font:normal 400 26px/26px 'Liberation Sans', sans-serif;color:#ffffff;letter-spacing:0.616px;-webkit-text-stroke:0.9px currentColor;">LandingView</div>
<svg style="left:139.5px;top:515.4px;" width="28.6" height="24.6" viewBox="2.41 3.41 18.12 16.21" preserveAspectRatio="none"><path d="M13.543 3.41c4.114 2.47 6.545 7.162 5.549 11.131-.024.093-.05.181-.076.272l.002.001c2.062 2.538 1.5 5.258 1.236 4.745-1.072-2.086-3.066-1.568-4.088-1.043a6.803 6.803 0 0 1-.281.158l-.02.012-.002.002c-2.115 1.123-4.957 1.205-7.812-.022a12.568 12.568 0 0 1-5.64-4.838c.649.48 1.35.902 2.097 1.252 3.019 1.414 6.051 1.311 8.197-.002C9.651 12.73 7.101 9.67 5.146 7.191a10.628 10.628 0 0 1-1.005-1.384c2.34 2.142 6.038 4.83 7.365 5.576C8.69 8.408 6.208 4.743 6.324 4.86c4.436 4.47 8.528 6.996 8.528 6.996.154.085.27.154.36.213.085-.215.16-.437.224-.668.708-2.588-.09-5.548-1.893-7.992z" fill="#f08f42"/></svg>
<div class="t" style="left:179.20px;top:515.79px;font:normal 400 26px/26px 'Liberation Sans', sans-serif;color:#f7f7f7;letter-spacing:0.532px;-webkit-text-stroke:0.9px currentColor;">ItemView</div>
<svg style="left:108.4px;top:556.6px;" width="34" height="28.8" viewBox="0 0 35 29" preserveAspectRatio="none"><path d="M3.300 6.200l17.200-3.300c1.600-.3 2.700.5 3 2l.3 1.800" fill="none" stroke="#5ab5e2" stroke-width="2.500" stroke-linecap="round" stroke-linejoin="round"/><path d="M3.300 6.200c-1.500.3-2.300 1.400-2 3l1.900 10c.3 1.500 1.400 2.300 3 2l.6-.1" fill="none" stroke="#5ab5e2" stroke-width="2.500" stroke-linecap="round" stroke-linejoin="round"/><rect x="9.200" y="9.200" width="24.300" height="18.300" rx="3" fill="none" stroke="#5ab5e2" stroke-width="2.500"/><path d="M10.300 24.500l6.200-6c.8-.8 1.700-.8 2.500 0l2.300 2.200 3.200-3.200c.8-.8 1.700-.8 2.500 0l5.500 5.500v2c0 1.400-.9 2.300-2.300 2.300H12.600c-1.400 0-2.300-.9-2.300-2.300z" fill="#5ab5e2"/><circle cx="17" cy="14.300" r="2.100" fill="#5ab5e2"/></svg>
<div class="t" style="left:153.00px;top:559.79px;font:normal 400 26px/26px 'Liberation Sans', sans-serif;color:#f7f7f7;letter-spacing:0.275px;-webkit-text-stroke:0.9px currentColor;">Assets</div>
<svg style="left:89px;top:608.8px;" width="10.5" height="16.5" viewBox="0 0 10.5 16.5"><path d="M1.8 1.8L8.7 8.25L1.8 14.7" fill="none" stroke="#adadad" stroke-width="3.0" stroke-linecap="round" stroke-linejoin="round"/></svg>
<svg style="left:111px;top:604.2px;" width="29.5" height="23.7" viewBox="0 0 30 24"><path d="M0 4.2C0 1.8 1.4 0 3.8 0h6.4c1.3 0 2 .3 2.8 1.1l1 1c.6.6 1.1.8 2 .8h10.2C28.600 2.900 30 4.300 30 6.600V7H0z" fill="#85888c"/><path d="M0 8.600h30v11.400c0 2.500-1.400 4-3.900 4H3.900C1.400 24 0 22.500 0 20z" fill="#8a8d91"/></svg>
<div class="t" style="left:151.00px;top:603.79px;font:normal 400 26px/26px 'Liberation Sans', sans-serif;color:#f7f7f7;letter-spacing:0.533px;-webkit-text-stroke:0.9px currentColor;">Preview Content</div>
<svg style="left:23.5px;top:1849.5px;" width="22" height="22" viewBox="0 0 24 24"><path d="M12 1.500V22.500M1.500 12H22.500" stroke="#dedede" stroke-width="2.600" stroke-linecap="round"/></svg>
<div style="left:56.5px;top:1838px;width:417px;height:44px;background:#6b6b6b;border-radius:11px;box-sizing:border-box;border:1.500px solid #787878;"></div>
<svg style="left:64px;top:1846px;" width="54" height="27" viewBox="0 0 54 27"><rect x="1.500" y="1.500" width="51" height="24" rx="12" fill="none" stroke="#a8a8a8" stroke-width="2"/><path d="M10.500 9h14M13 13.500h9M15.500 18h4" stroke="#a8a8a8" stroke-width="2" stroke-linecap="round"/><path d="M33 11.500l4.500 4.500 4.500-4.500" fill="none" stroke="#a8a8a8" stroke-width="2.300" stroke-linecap="round" stroke-linejoin="round"/></svg>
<div class="t" style="left:124.20px;top:1848.38px;font:normal 400 22px/22px 'Liberation Sans', sans-serif;color:#a2a2a2;letter-spacing:0.688px;">Filter</div>
<svg style="left:401px;top:1846px;" width="28" height="28" viewBox="0 0 28 28"><circle cx="14" cy="13.600" r="12" fill="none" stroke="#cfcfcf" stroke-width="2"/><path d="M14.500 6.500V14.200H8.500" fill="none" stroke="#cfcfcf" stroke-width="2" stroke-linecap="round" stroke-linejoin="round"/></svg>
<svg style="left:435px;top:1846px;" width="28" height="28" viewBox="0 0 28 28"><rect x="2" y="1.600" width="24" height="24" rx="2.500" fill="none" stroke="#cfcfcf" stroke-width="2"/><path d="M7 13.600h8M11 9.600v8M18.500 13.600h4.500" stroke="#cfcfcf" stroke-width="2.200" stroke-linecap="round"/></svg>
<div style="left:486px;top:268px;width:1239px;height:40px;background:#2f3239;"></div>
<div style="left:584px;top:270px;width:14px;height:1156px;background:#3e3f45;border-radius:7px 7px 7px 7px;box-shadow:0 0 0 1.500px #292a30;"></div>
<div style="left:584px;top:710px;width:14px;height:676px;background:#4e4f54;border-radius:7px 7px 7px 7px;box-shadow:0 0 0 1.500px #292a30;"></div>
<div style="left:584px;top:790px;width:14px;height:556px;background:#5e5f63;border-radius:7px 7px 7px 7px;box-shadow:0 0 0 1.500px #292a30;"></div>
<div style="left:584px;top:870px;width:14px;height:356px;background:#6f6f72;border-radius:7px 7px 7px 7px;box-shadow:0 0 0 1.500px #292a30;"></div>
<div style="left:584px;top:948px;width:14px;height:40px;background:#9e9e9f;"></div>
<svg style="left:586.5px;top:961.5px;" width="9" height="13" viewBox="0 0 9 13"><path d="M2 2L7 6.500L2 11" fill="none" stroke="#26272c" stroke-width="2.200" stroke-linecap="round" stroke-linejoin="round"/></svg>
<div style="left:584px;top:1068px;width:14px;height:40px;background:#9e9e9f;"></div>
<svg style="left:586.5px;top:1081.5px;" width="9" height="13" viewBox="0 0 9 13"><path d="M2 2L7 6.500L2 11" fill="none" stroke="#26272c" stroke-width="2.200" stroke-linecap="round" stroke-linejoin="round"/></svg>
<div style="left:584px;top:1470px;width:14px;height:116px;background:#3e3f45;border-radius:7px 7px 7px 7px;box-shadow:0 0 0 1.500px #292a30;"></div>
<div style="left:1733px;top:361px;width:16px;height:1102px;background:#9c9c9e;border-radius:8px;"></div>
<div class="t" style="left:559.40px;top:196.52px;font:normal 400 27.5px/27.5px 'Liberation Sans', sans-serif;color:#6e6e74;letter-spacing:0.000px;-webkit-text-stroke:0.5px currentColor;">8</div>
<div class="code" style="left:621.8px;top:190.13px;letter-spacing:-0.053px;"><span class="k">import</span><span class="p"> SwiftUI</span></div>
<div class="t" style="left:560.40px;top:236.52px;font:normal 400 27.5px/27.5px 'Liberation Sans', sans-serif;color:#6e6e74;letter-spacing:0.000px;-webkit-text-stroke:0.5px currentColor;">9</div>
<div class="t" style="left:544.11px;top:276.52px;font:normal 400 27.5px/27.5px 'Liberation Sans', sans-serif;color:#e8e8e8;letter-spacing:0.000px;-webkit-text-stroke:0.5px currentColor;">10</div>
<div class="code" style="left:621.8px;top:270.13px;letter-spacing:-0.053px;"><span class="k">struct</span><span class="p"> </span><span class="td">LandingView</span><span class="p">: </span><span class="ot">View</span><span class="p"> {</span></div>
<div class="t" style="left:547.15px;top:316.52px;font:normal 400 27.5px/27.5px 'Liberation Sans', sans-serif;color:#6e6e74;letter-spacing:0.000px;-webkit-text-stroke:0.5px currentColor;">11</div>
<div class="t" style="left:545.11px;top:356.52px;font:normal 400 27.5px/27.5px 'Liberation Sans', sans-serif;color:#6e6e74;letter-spacing:0.000px;-webkit-text-stroke:0.5px currentColor;">12</div>
<div class="code" style="left:621.8px;top:350.13px;letter-spacing:-0.053px;"><span class="p">    </span><span class="c">// </span><span class="m">MARK: Stored properties</span></div>
<div class="t" style="left:544.11px;top:396.52px;font:normal 400 27.5px/27.5px 'Liberation Sans', sans-serif;color:#6e6e74;letter-spacing:0.000px;-webkit-text-stroke:0.5px currentColor;">13</div>
<div class="t" style="left:544.11px;top:436.52px;font:normal 400 27.5px/27.5px 'Liberation Sans', sans-serif;color:#6e6e74;letter-spacing:0.000px;-webkit-text-stroke:0.5px currentColor;">14</div>
<div class="code" style="left:621.8px;top:430.13px;letter-spacing:-0.053px;"><span class="p">    </span><span class="c">// The item currently being added</span></div>
<div class="t" style="left:544.11px;top:476.52px;font:normal 400 27.5px/27.5px 'Liberation Sans', sans-serif;color:#6e6e74;letter-spacing:0.000px;-webkit-text-stroke:0.5px currentColor;">15</div>
<div class="code" style="left:621.8px;top:470.13px;letter-spacing:-0.053px;"><span class="p">    </span><span class="ot">@State</span><span class="p"> </span><span class="k">var</span><span class="p"> </span><span class="d">newItemDescription</span><span class="p">: </span><span class="ot">String</span><span class="p"> = </span><span class="s">&quot;&quot;</span></div>
<div class="t" style="left:544.11px;top:516.52px;font:normal 400 27.5px/27.5px 'Liberation Sans', sans-serif;color:#6e6e74;letter-spacing:0.000px;-webkit-text-stroke:0.5px currentColor;">16</div>
<div class="t" style="left:545.11px;top:556.52px;font:normal 400 27.5px/27.5px 'Liberation Sans', sans-serif;color:#6e6e74;letter-spacing:0.000px;-webkit-text-stroke:0.5px currentColor;">17</div>
<div class="code" style="left:621.8px;top:550.13px;letter-spacing:-0.053px;"><span class="p">    </span><span class="c">// The search text</span></div>
<div class="t" style="left:544.11px;top:596.52px;font:normal 400 27.5px/27.5px 'Liberation Sans', sans-serif;color:#6e6e74;letter-spacing:0.000px;-webkit-text-stroke:0.5px currentColor;">18</div>
<div class="code" style="left:621.8px;top:590.13px;letter-spacing:-0.053px;"><span class="p">    </span><span class="ot">@State</span><span class="p"> </span><span class="k">var</span><span class="p"> </span><span class="d">searchText</span><span class="p"> = </span><span class="s">&quot;&quot;</span></div>
<div class="t" style="left:545.11px;top:636.52px;font:normal 400 27.5px/27.5px 'Liberation Sans', sans-serif;color:#6e6e74;letter-spacing:0.000px;-webkit-text-stroke:0.5px currentColor;">19</div>
<div class="t" style="left:544.11px;top:676.52px;font:normal 400 27.5px/27.5px 'Liberation Sans', sans-serif;color:#6e6e74;letter-spacing:0.000px;-webkit-text-stroke:0.5px currentColor;">20</div>
<div class="code" style="left:621.8px;top:670.13px;letter-spacing:-0.053px;"><span class="p">    </span><span class="c">// </span><span class="m">MARK: Computed properties</span></div>
<div class="t" style="left:545.11px;top:716.52px;font:normal 400 27.5px/27.5px 'Liberation Sans', sans-serif;color:#6e6e74;letter-spacing:0.000px;-webkit-text-stroke:0.5px currentColor;">21</div>
<div class="code" style="left:621.8px;top:710.13px;letter-spacing:-0.053px;"><span class="p">    </span><span class="k">var</span><span class="p"> </span><span class="d">body</span><span class="p">: </span><span class="k">some</span><span class="p"> </span><span class="ot">View</span><span class="p"> {</span></div>
<div class="t" style="left:545.11px;top:756.52px;font:normal 400 27.5px/27.5px 'Liberation Sans', sans-serif;color:#6e6e74;letter-spacing:0.000px;-webkit-text-stroke:0.5px currentColor;">22</div>
<div class="t" style="left:544.11px;top:796.52px;font:normal 400 27.5px/27.5px 'Liberation Sans', sans-serif;color:#6e6e74;letter-spacing:0.000px;-webkit-text-stroke:0.5px currentColor;">23</div>
<div class="code" style="left:621.8px;top:790.13px;letter-spacing:-0.053px;"><span class="p">        </span><span class="ot">NavigationView</span><span class="p"> {</span></div>
<div class="t" style="left:544.11px;top:836.52px;font:normal 400 27.5px/27.5px 'Liberation Sans', sans-serif;color:#6e6e74;letter-spacing:0.000px;-webkit-text-stroke:0.5px currentColor;">24</div>
<div class="t" style="left:544.11px;top:876.52px;font:normal 400 27.5px/27.5px 'Liberation Sans', sans-serif;color:#6e6e74;letter-spacing:0.000px;-webkit-text-stroke:0.5px currentColor;">25</div>
<div class="code" style="left:621.8px;top:870.13px;letter-spacing:-0.053px;"><span class="p">            </span><span class="ot">VStack</span><span class="p"> {</span></div>
<div class="t" style="left:544.11px;top:916.52px;font:normal 400 27.5px/27.5px 'Liberation Sans', sans-serif;color:#6e6e74;letter-spacing:0.000px;-webkit-text-stroke:0.5px currentColor;">26</div>
<div class="t" style="left:545.11px;top:956.52px;font:normal 400 27.5px/27.5px 'Liberation Sans', sans-serif;color:#6e6e74;letter-spacing:0.000px;-webkit-text-stroke:0.5px currentColor;">27</div>
<div class="code" style="left:621.8px;top:950.13px;letter-spacing:-0.053px;"><span class="p">                </span><span class="ot">List</span><span class="p"> {</span><span class="fold"><b><i></i><i></i><i></i></b></span><span class="p">}</span></div>
<div class="t" style="left:544.11px;top:996.52px;font:normal 400 27.5px/27.5px 'Liberation Sans', sans-serif;color:#6e6e74;letter-spacing:0.000px;-webkit-text-stroke:0.5px currentColor;">56</div>
<div class="code" style="left:621.8px;top:990.13px;letter-spacing:-0.053px;"><span class="p">                .</span><span class="f">searchable</span><span class="p">(</span><span class="f">text</span><span class="p">: </span><span class="pv">$searchText</span><span class="p">)</span></div>
<div class="t" style="left:545.11px;top:1036.52px;font:normal 400 27.5px/27.5px 'Liberation Sans', sans-serif;color:#6e6e74;letter-spacing:0.000px;-webkit-text-stroke:0.5px currentColor;">57</div>
<div class="t" style="left:544.11px;top:1076.52px;font:normal 400 27.5px/27.5px 'Liberation Sans', sans-serif;color:#6e6e74;letter-spacing:0.000px;-webkit-text-stroke:0.5px currentColor;">58</div>
<div class="code" style="left:621.8px;top:1070.13px;letter-spacing:-0.053px;"><span class="p">                </span><span class="ot">HStack</span><span class="p"> {</span><span class="fold"><b><i></i><i></i><i></i></b></span><span class="p">}</span></div>
<div class="t" style="left:544.11px;top:1116.52px;font:normal 400 27.5px/27.5px 'Liberation Sans', sans-serif;color:#6e6e74;letter-spacing:0.000px;-webkit-text-stroke:0.5px currentColor;">70</div>
<div class="code" style="left:621.8px;top:1110.13px;letter-spacing:-0.053px;"><span class="p">                .</span><span class="f">padding</span><span class="p">(</span><span class="n">20</span><span class="p">)</span></div>
<div class="t" style="left:545.11px;top:1156.52px;font:normal 400 27.5px/27.5px 'Liberation Sans', sans-serif;color:#6e6e74;letter-spacing:0.000px;-webkit-text-stroke:0.5px currentColor;">71</div>
<div class="t" style="left:545.11px;top:1196.52px;font:normal 400 27.5px/27.5px 'Liberation Sans', sans-serif;color:#6e6e74;letter-spacing:0.000px;-webkit-text-stroke:0.5px currentColor;">72</div>
<div class="code" style="left:621.8px;top:1190.13px;letter-spacing:-0.053px;"><span class="p">            }</span></div>
<div class="t" style="left:544.11px;top:1236.52px;font:normal 400 27.5px/27.5px 'Liberation Sans', sans-serif;color:#6e6e74;letter-spacing:0.000px;-webkit-text-stroke:0.5px currentColor;">73</div>
<div class="code" style="left:621.8px;top:1230.13px;letter-spacing:-0.053px;"><span class="p">            .</span><span class="f">navigationTitle</span><span class="p">(</span><span class="s">&quot;To do&quot;</span><span class="p">)</span></div>
<div class="t" style="left:544.11px;top:1276.52px;font:normal 400 27.5px/27.5px 'Liberation Sans', sans-serif;color:#6e6e74;letter-spacing:0.000px;-webkit-text-stroke:0.5px currentColor;">74</div>
<div class="t" style="left:544.11px;top:1316.52px;font:normal 400 27.5px/27.5px 'Liberation Sans', sans-serif;color:#6e6e74;letter-spacing:0.000px;-webkit-text-stroke:0.5px currentColor;">75</div>
<div class="code" style="left:621.8px;top:1310.13px;letter-spacing:-0.053px;"><span class="p">        }</span></div>
<div class="t" style="left:544.11px;top:1356.52px;font:normal 400 27.5px/27.5px 'Liberation Sans', sans-serif;color:#6e6e74;letter-spacing:0.000px;-webkit-text-stroke:0.5px currentColor;">76</div>
<div class="code" style="left:621.8px;top:1350.13px;letter-spacing:-0.053px;"><span class="p">    }</span></div>
<div class="t" style="left:545.11px;top:1396.52px;font:normal 400 27.5px/27.5px 'Liberation Sans', sans-serif;color:#6e6e74;letter-spacing:0.000px;-webkit-text-stroke:0.5px currentColor;">77</div>
<div class="code" style="left:621.8px;top:1390.13px;letter-spacing:-0.053px;"><span class="p">}</span></div>
<div class="t" style="left:544.11px;top:1436.52px;font:normal 400 27.5px/27.5px 'Liberation Sans', sans-serif;color:#6e6e74;letter-spacing:0.000px;-webkit-text-stroke:0.5px currentColor;">78</div>
<div class="t" style="left:545.11px;top:1476.52px;font:normal 400 27.5px/27.5px 'Liberation Sans', sans-serif;color:#6e6e74;letter-spacing:0.000px;-webkit-text-stroke:0.5px currentColor;">79</div>
<div class="code" style="left:621.8px;top:1470.13px;letter-spacing:-0.053px;"><span class="f">#Preview</span><span class="p"> {</span></div>
<div class="t" style="left:544.11px;top:1516.52px;font:normal 400 27.5px/27.5px 'Liberation Sans', sans-serif;color:#6e6e74;letter-spacing:0.000px;-webkit-text-stroke:0.5px currentColor;">80</div>
<div class="code" style="left:621.8px;top:1510.13px;letter-spacing:-0.053px;"><span class="p">    </span><span class="pt">LandingView</span><span class="p">()</span></div>
<div class="t" style="left:545.11px;top:1556.52px;font:normal 400 27.5px/27.5px 'Liberation Sans', sans-serif;color:#6e6e74;letter-spacing:0.000px;-webkit-text-stroke:0.5px currentColor;">81</div>
<div class="code" style="left:621.8px;top:1550.13px;letter-spacing:-0.053px;"><span class="p">}</span></div>
<div class="t" style="left:545.11px;top:1596.52px;font:normal 400 27.5px/27.5px 'Liberation Sans', sans-serif;color:#6e6e74;letter-spacing:0.000px;-webkit-text-stroke:0.5px currentColor;">82</div>
<div style="left:1782px;top:214px;width:61px;height:51px;background:#383838;border-radius:12px;box-shadow:inset 0 0 0 1px rgba(255,255,255,0.20), 0 0 0 0.500px rgba(0,0,0,0.25), 0 1px 5px rgba(0,0,0,0.30);"></div>
<svg style="left:1801.1px;top:224.5px;" width="22" height="32" viewBox="0 0 22 32"><g fill="none" stroke="#fff" stroke-width="1.950" stroke-linejoin="round" stroke-linecap="round"><path d="M7.300 12.900V6.500L3.100 1.900H18.100L13.900 6.500V12.900"/><path d="M1.700 20.200C1.700 16 5.500 12.900 10.560 12.900C15.600 12.900 19.400 16 19.400 20.200Z"/><path d="M10.560 20.200V29.800"/></g></svg>
<div style="left:1864px;top:214px;width:202px;height:52px;background:#6b7fa7;border-radius:11px;box-shadow:0 1px 4px rgba(0,0,0,0.3);"></div>
<svg style="left:1881px;top:226px;" width="24" height="26" viewBox="0 0 24 26"><g fill="none" stroke="#fff" stroke-width="1.900" stroke-linecap="round"><path d="M6 1.200h12M3.800 4.700h16.400"/><rect x="1.600" y="8.300" width="20.800" height="16" rx="3"/></g></svg>
<div class="t" style="left:1916.20px;top:229.38px;font:normal 400 22px/22px 'Liberation Sans', sans-serif;color:#ffffff;letter-spacing:0.710px;">LandingView</div>
<div style="left:2062.5px;top:584.5px;width:10px;height:47.5px;background:#333435;border-radius:2px 0 0 2px;border-top:1.500px solid #4a4b4d;box-sizing:border-box;"></div>
<div style="left:2062.5px;top:676.5px;width:10px;height:93.5px;background:#333435;border-radius:2px 0 0 2px;border-top:1.500px solid #4a4b4d;box-sizing:border-box;"></div>
<div style="left:2062.5px;top:797px;width:10px;height:92px;background:#333435;border-radius:2px 0 0 2px;border-top:1.500px solid #4a4b4d;box-sizing:border-box;"></div>
<div style="left:2709px;top:738.5px;width:9px;height:149px;background:#333435;border-radius:0 2px 2px 0;border-top:1.500px solid #4a4b4d;box-sizing:border-box;"></div>
<div style="left:2071px;top:345px;width:639px;height:1333px;background:#2d2d2d;border-radius:111px;box-shadow:inset 0 0 0 1.300px #6d6d6d, 0 0 0 0.500px rgba(40,40,40,0.6);"></div>
<div style="left:2072px;top:484.5px;width:8px;height:10px;background:#222222;"></div>
<div style="left:2701px;top:484.5px;width:8px;height:10px;background:#222222;"></div>
<div style="left:2072px;top:1530px;width:8px;height:10px;background:#222222;"></div>
<div style="left:2701px;top:1530px;width:8px;height:10px;background:#222222;"></div>
<div style="left:2567px;top:346px;width:10px;height:8px;background:#222222;"></div>
<div style="left:2206px;top:1669px;width:10px;height:8px;background:#222222;"></div>
<div style="left:2080px;top:354px;width:621px;height:1315px;background:#000;border-radius:103px;"></div>
<div class="screen" style="left:2094px;top:368px;width:593px;height:1287px;border-radius:89px;background:#f2f2f7;overflow:hidden;"><div style="left:0;top:1130px;width:593px;height:157px;background:#fff;"></div></div>
<div style="left:2296px;top:385px;width:189px;height:55px;background:#000;border-radius:28px;"></div>
<div class="t" style="left:2119.50px;top:528.07px;font:normal 700 50px/50px 'Liberation Sans', sans-serif;color:#000;letter-spacing:-1.702px;-webkit-text-stroke:1.0px currentColor;">To do</div>
<div style="left:2118.5px;top:595.7px;width:544.3px;height:54px;background:#e3e3e8;border-radius:15px;"></div>
<svg style="left:2129.5px;top:610px;" width="27" height="27" viewBox="0 0 27 27"><circle cx="10.600" cy="10.600" r="8.300" fill="none" stroke="#828287" stroke-width="2.400"/><path d="M16.700 16.800L24.200 24.200" stroke="#828287" stroke-width="2.800" stroke-linecap="round"/></svg>
<div class="t" style="left:2165.50px;top:609.91px;font:normal 400 25.5px/25.5px 'Liberation Sans', sans-serif;color:#838388;letter-spacing:-0.123px;-webkit-text-stroke:0.35px currentColor;">Search</div>
<div style="left:2124.6px;top:672.6px;width:532px;height:233.3px;background:#fff;border-radius:15px;"></div>
<div style="left:2221px;top:738px;width:435.6px;height:1px;background:#d6d6d9;"></div>
<div style="left:2221px;top:839px;width:435.6px;height:1px;background:#d6d6d9;"></div>
<svg style="left:2157.7px;top:687.6px;" width="36" height="36" viewBox="0 0 36 36"><circle cx="18" cy="18" r="15.200" fill="none" stroke="#3478f6" stroke-width="2.500"/></svg>
<svg style="left:2157.7px;top:757.2px;" width="36" height="36" viewBox="0 0 36 36"><circle cx="18" cy="18" r="15.200" fill="none" stroke="#3478f6" stroke-width="2.500"/><path d="M10.800 18.800L15.700 24L24.800 11.600" fill="none" stroke="#3478f6" stroke-width="2.500" stroke-linecap="round" stroke-linejoin="round"/></svg>
<svg style="left:2157.7px;top:854.8px;" width="36" height="36" viewBox="0 0 36 36"><circle cx="18" cy="18" r="15.200" fill="none" stroke="#3478f6" stroke-width="2.500"/></svg>
<div class="t" style="left:2220.60px;top:693.31px;font:normal 400 25.5px/25.5px 'Liberation Sans', sans-serif;color:#000;letter-spacing:0.278px;-webkit-text-stroke:0.35px currentColor;">Study for Chemistry quiz</div>
<div class="t" style="left:2219.60px;top:762.71px;font:normal 400 25.5px/25.5px 'Liberation Sans', sans-serif;color:#000;letter-spacing:0.130px;-webkit-text-stroke:0.35px currentColor;">Finish Computer</div>
<div class="t" style="left:2220.60px;top:796.21px;font:normal 400 25.5px/25.5px 'Liberation Sans', sans-serif;color:#000;letter-spacing:0.111px;-webkit-text-stroke:0.35px currentColor;">Science assignment</div>
<div class="t" style="left:2220.60px;top:860.11px;font:normal 400 25.5px/25.5px 'Liberation Sans', sans-serif;color:#000;letter-spacing:0.073px;-webkit-text-stroke:0.35px currentColor;">Go for a run around campus</div>
<div class="t" style="left:2122.70px;top:1545.21px;font:normal 400 25.5px/25.5px 'Liberation Sans', sans-serif;color:#c5c5c7;letter-spacing:0.421px;-webkit-text-stroke:0.35px currentColor;">Enter a to-do item</div>
<div class="t" style="left:2619.00px;top:1548.76px;font:normal 400 18px/18px 'Liberation Sans', sans-serif;color:#3478f6;letter-spacing:-0.702px;-webkit-text-stroke:0px currentColor;">ADD</div>
<div style="left:1782px;top:1756.5px;width:161px;height:50.5px;background:#383838;border-radius:12px;box-shadow:inset 0 0 0 1px rgba(255,255,255,0.20), 0 0 0 0.500px rgba(0,0,0,0.25), 0 1px 5px rgba(0,0,0,0.30);"></div>
<div style="left:1965px;top:1756.5px;width:61.5px;height:50.5px;background:#383838;border-radius:12px;box-shadow:inset 0 0 0 1px rgba(255,255,255,0.20), 0 0 0 0.500px rgba(0,0,0,0.25), 0 1px 5px rgba(0,0,0,0.30);"></div>
<div style="left:2048px;top:1756.5px;width:363.5px;height:50.5px;background:#383838;border-radius:12px;box-shadow:inset 0 0 0 1px rgba(255,255,255,0.20), 0 0 0 0.500px rgba(0,0,0,0.25), 0 1px 5px rgba(0,0,0,0.30);"></div>
<div style="left:2793px;top:1756.5px;width:206px;height:50.5px;background:#383838;border-radius:12px;box-shadow:inset 0 0 0 1px rgba(255,255,255,0.20), 0 0 0 0.500px rgba(0,0,0,0.25), 0 1px 5px rgba(0,0,0,0.30);"></div>
<svg style="left:1798.5px;top:1768.5px;" width="27" height="27" viewBox="0 0 27 27"><circle cx="13.500" cy="13.500" r="13.500" fill="#3478f6"/><path d="M10.200 8.400L19 13.500L10.200 18.600Z" fill="#1e2b45" stroke="#1e2b45" stroke-width="1.500" stroke-linejoin="round"/></svg>
<svg style="left:1846px;top:1769.5px;" width="26" height="25" viewBox="0 0 26 25"><rect x="1.700" y="1.700" width="22.600" height="21.600" rx="3" fill="none" stroke="#e4e4e4" stroke-width="2.200"/><path d="M9.300 5.800V17.300L12.300 14.600L14.400 19.400L16.300 18.600L14.300 13.900L18.200 13.700Z" fill="#e4e4e4"/></svg>
<svg style="left:1900px;top:1772px;" width="26" height="21" viewBox="0 0 26 21"><rect x="1.1" y="1.1" width="5.600" height="7.600" rx="1" fill="none" stroke="#d8d8d8" stroke-width="1.800"/><rect x="10.0" y="1.1" width="5.600" height="7.600" rx="1" fill="none" stroke="#d8d8d8" stroke-width="1.800"/><rect x="18.900000000000002" y="1.1" width="5.600" height="7.600" rx="1" fill="none" stroke="#d8d8d8" stroke-width="1.800"/><rect x="1.1" y="11.7" width="5.600" height="7.600" rx="1" fill="none" stroke="#d8d8d8" stroke-width="1.800"/><rect x="10.0" y="11.7" width="5.600" height="7.600" rx="1" fill="none" stroke="#d8d8d8" stroke-width="1.800"/><rect x="18.900000000000002" y="11.7" width="5.600" height="7.600" rx="1" fill="none" stroke="#d8d8d8" stroke-width="1.800"/></svg>
<svg style="left:1982.5px;top:1769.5px;" width="26" height="26" viewBox="0 0 26 26"><rect x="1.200" y="1.300" width="23.600" height="9.800" rx="4.900" fill="none" stroke="#e4e4e4" stroke-width="2.200"/><circle cx="6.700" cy="6.200" r="2.800" fill="#e4e4e4"/><rect x="0.200" y="14" width="25.600" height="11.600" rx="5.800" fill="#e4e4e4"/><circle cx="19.600" cy="19.800" r="3.200" fill="#383838"/></svg>
<svg style="left:2066px;top:1770.5px;" width="16" height="24" viewBox="0 0 16 24"><rect x="1.100" y="1.100" width="13.800" height="21.800" rx="2.800" fill="none" stroke="#e4e4e4" stroke-width="1.900"/><path d="M5.800 3.400h4.400M5 20.500h6" stroke="#e4e4e4" stroke-width="1.300" stroke-linecap="round"/></svg>
<div class="t" style="left:2094.00px;top:1771.68px;font:normal 400 22px/22px 'Liberation Sans', sans-serif;color:#ebebeb;letter-spacing:0.488px;">Automatic – iPhone 15 Pro</div>
<svg style="left:2378px;top:1777px;" width="16" height="11.3" viewBox="0 0 17 12"><path d="M1.800 2L8.500 9.400L15.200 2" fill="none" stroke="#ebebeb" stroke-width="2.800" stroke-linecap="round" stroke-linejoin="round"/></svg>
<svg style="left:2809.8px;top:1768.2px;" width="27.2" height="27.2" viewBox="0 0 28 28"><circle cx="11.400" cy="11.700" r="9.300" fill="none" stroke="#ececec" stroke-width="2.500"/><path d="M18.300 18.700L25.300 25.700" stroke="#ececec" stroke-width="3" stroke-linecap="round"/><path d="M7.400 11.700h8" stroke="#ececec" stroke-width="2.200" stroke-linecap="round"/></svg>
<svg style="left:2857.8px;top:1768.2px;" width="27.2" height="27.2" viewBox="0 0 28 28"><circle cx="11.400" cy="11.700" r="9.300" fill="none" stroke="#ececec" stroke-width="2.500"/><path d="M18.300 18.700L25.300 25.700" stroke="#ececec" stroke-width="3" stroke-linecap="round"/><path d="M9.600 9.100L11.800 7.600V16" fill="none" stroke="#ececec" stroke-width="1.900" stroke-linecap="round" stroke-linejoin="round"/></svg>
<svg style="left:2905.8px;top:1768.2px;" width="27.2" height="27.2" viewBox="0 0 28 28"><circle cx="11.400" cy="11.700" r="9.300" fill="none" stroke="#b4b4b4" stroke-width="2.500"/><path d="M18.300 18.700L25.300 25.700" stroke="#b4b4b4" stroke-width="3" stroke-linecap="round"/><rect x="7.900" y="8.200" width="7" height="7" rx="1.300" fill="none" stroke="#b4b4b4" stroke-width="2"/></svg>
<svg style="left:2953.7px;top:1768.2px;" width="27.2" height="27.2" viewBox="0 0 28 28"><circle cx="11.400" cy="11.700" r="9.300" fill="none" stroke="#ececec" stroke-width="2.500"/><path d="M18.300 18.700L25.300 25.700" stroke="#ececec" stroke-width="3" stroke-linecap="round"/><path d="M7.400 11.700h8M11.400 7.700v8" stroke="#ececec" stroke-width="2.200" stroke-linecap="round"/></svg>
</div></body></html>
